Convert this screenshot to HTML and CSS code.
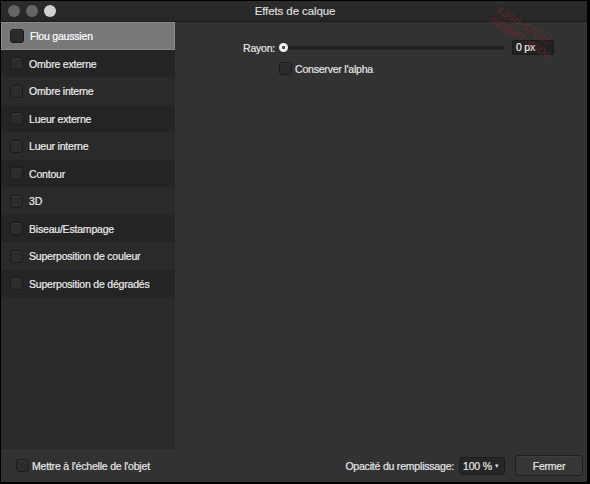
FILE: index.html
```html
<!DOCTYPE html>
<html lang="fr">
<head>
<meta charset="utf-8">
<title>Effets de calque</title>
<link rel="stylesheet" href="styles.css">
</head>
<body>
<div class="window">
  <div class="titlebar">
    <div class="lights">
      <span class="light"></span>
      <span class="light"></span>
      <span class="light light-on"></span>
    </div>
    <div class="title">Effets de calque</div>
  </div>
  <div class="main">
    <ul class="sidebar">
      <li class="row selected"><span class="box"></span>Flou gaussien</li>
      <li class="row"><span class="box"></span>Ombre externe</li>
      <li class="row alt"><span class="box"></span>Ombre interne</li>
      <li class="row"><span class="box"></span>Lueur externe</li>
      <li class="row alt"><span class="box"></span>Lueur interne</li>
      <li class="row"><span class="box"></span>Contour</li>
      <li class="row alt"><span class="box"></span>3D</li>
      <li class="row"><span class="box"></span>Biseau/Estampage</li>
      <li class="row alt"><span class="box"></span>Superposition de couleur</li>
      <li class="row"><span class="box"></span>Superposition de dégradés</li>
    </ul>
    <div class="content">
      <div class="field">
        <span class="label">Rayon:</span>
        <div class="slider"><span class="track"></span><span class="knob"></span></div>
        <span class="input">0 px</span>
      </div>
      <div class="check-line">
        <span class="box"></span>Conserver l'alpha
      </div>
    </div>
  </div>
  <div class="footer">
    <div class="scale"><span class="box"></span>Mettre à l'échelle de l'objet</div>
    <div class="actions">
      <span class="opacity-label">Opacité du remplissage:</span>
      <span class="select">100 %<span class="caret">▾</span></span>
      <span class="button">Fermer</span>
    </div>
  </div>
  <div class="watermark"><span>439d-d701c</span><span>dd3bd7-de0c</span></div>
</div>
</body>
</html>
```
FILE: styles.css
```css
* { box-sizing: border-box; }
html, body { margin: 0; padding: 0; }
body {
  background: #000;
  width: 590px;
  height: 484px;
  overflow: hidden;
  font-family: "Liberation Sans", Arial, sans-serif;
  font-size: 10.5px;
  letter-spacing: -0.2px;
  -webkit-text-stroke: 0.2px currentColor;
  color: #e6e6e6;
}
.window {
  position: relative;
  margin: 1px 0 0 1px;
  width: 586px;
  height: 481px;
  display: flex;
  flex-direction: column;
  background: #323232;
  overflow: hidden;
}
.titlebar {
  height: 21px;
  flex: none;
  position: relative;
  display: flex;
  align-items: center;
  justify-content: center;
  background: linear-gradient(#2c2c2c, #262626);
  border-bottom: 1px solid #1c1c1c;
}
.lights {
  position: absolute;
  left: 7px;
  top: 4px;
  display: flex;
  gap: 6px;
}
.light {
  width: 12px;
  height: 12px;
  border-radius: 50%;
  background: #66666a;
}
.light-on { background: #cfcfcf; }
.title {
  font-size: 11.5px;
  letter-spacing: -0.1px;
  color: #dedede;
  padding-left: 2px;
}
.main {
  flex: 1;
  display: flex;
  min-height: 0;
}
.sidebar {
  list-style: none;
  margin: 0;
  padding: 0;
  width: 174px;
  flex: none;
  background: #2a2a2a;
}
.row {
  height: 27.5px;
  display: flex;
  align-items: center;
  padding: 1px 0 0 9px;
  gap: 6px;
  background: #242424;
  color: #ececec;
}
.row.alt { background: #2a2a2a; }
.row.selected {
  background: #78777a;
  box-shadow: inset 0 0 0 1px #8a898c;
  color: #fff;
}
.box {
  width: 13px;
  height: 13px;
  flex: none;
  border-radius: 3px;
  background: #2c2c2c;
  border: 1px solid #1b1b1b;
  box-shadow: inset 0 1px 0 #363636;
}
.row.selected .box {
  width: 14px;
  height: 14px;
  background: #2a2a2a;
  border-color: #1a1a1a;
}
.content {
  flex: 1;
  padding: 18px 0 0 0;
  display: flex;
  flex-direction: column;
  gap: 7px;
}
.field {
  display: flex;
  align-items: center;
  height: 15px;
  margin-left: 68px;
}
.label {
  width: 31px;
  text-align: right;
  margin-right: 5px;
}
.slider {
  position: relative;
  width: 226px;
  height: 15px;
  display: flex;
  align-items: center;
}
.track {
  width: 100%;
  height: 4px;
  border-radius: 2px;
  background: #222;
  box-shadow: 0 1px 0 #3a3a3a;
}
.knob {
  position: absolute;
  left: 0;
  top: 3px;
  width: 9px;
  height: 9px;
  border-radius: 50%;
  background: radial-gradient(circle, #444 0 1.3px, #f2f2f2 1.8px);
}
.input {
  margin-left: 7px;
  width: 42px;
  height: 15px;
  padding-left: 3px;
  background: #222;
  border: 1px solid #1a1a1a;
  border-radius: 2px;
  line-height: 13px;
  color: #f0f0f0;
}
.check-line {
  margin-left: 104px;
  display: flex;
  align-items: center;
  gap: 3px;
  height: 13px;
}
.footer {
  height: 33px;
  flex: none;
  display: flex;
  align-items: center;
  justify-content: space-between;
  padding: 0 4px 0 15px;
  background: #323232;
}
.scale {
  display: flex;
  align-items: center;
  gap: 3px;
}
.actions {
  display: flex;
  align-items: center;
}
.opacity-label { margin-right: 5px; }
.select {
  width: 46px;
  height: 18px;
  display: flex;
  align-items: center;
  justify-content: space-between;
  padding: 0 5px 0 3px;
  background: #262626;
  border: 1px solid #1c1c1c;
  border-radius: 3px;
}
.caret { font-size: 7px; color: #ddd; -webkit-text-stroke: 0; }
.button {
  margin-left: 10px;
  width: 68px;
  height: 21px;
  display: flex;
  align-items: center;
  justify-content: center;
  background: #363636;
  border: 1px solid #1f1f1f;
  border-radius: 3px;
  box-shadow: inset 0 1px 0 #3e3e3e;
}
.watermark {
  position: absolute;
  left: 500px;
  top: 2px;
  width: max-content;
  white-space: nowrap;
  transform: rotate(33deg);
  transform-origin: left top;
  display: flex;
  flex-direction: column;
  font-size: 11px;
  letter-spacing: 0.5px;
  -webkit-text-stroke: 0;
  color: rgba(160, 30, 45, 0.5);
  pointer-events: none;
  line-height: 12px;
}
```
